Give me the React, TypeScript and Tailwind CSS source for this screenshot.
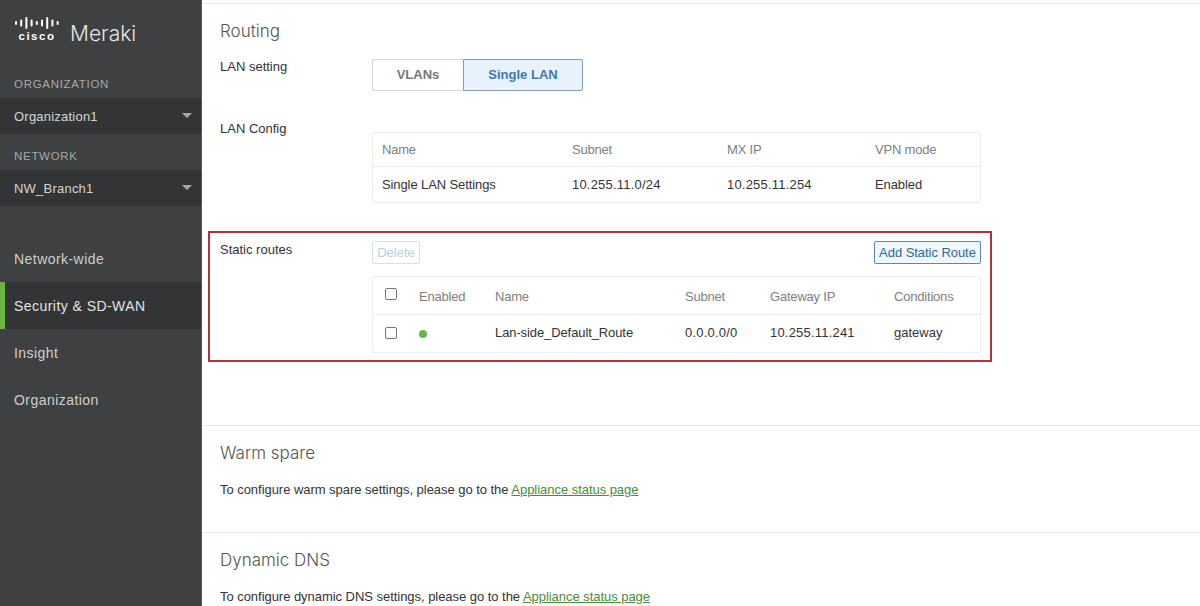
const sans = "font-['Liberation_Sans','Inter',sans-serif]";
const inter = "font-['Inter',sans-serif]";

function CiscoLogo() {
  const bars = [4, 7, 12, 7, 4, 7, 12, 7, 4];
  return (
    <div className="-mt-[11px] flex w-[46px] flex-col items-center">
      <svg width="46" height="14" viewBox="0 0 46 14">
        {bars.map((h, i) => (
          <rect key={i} x={1 + i * 5.2} y={7 - h / 2} width="2" height={h} rx="1" fill="#ffffff" />
        ))}
      </svg>
      <span className="mt-[1px] text-[11.5px] leading-[10px] font-bold tracking-[1.5px] text-white">cisco</span>
    </div>
  );
}

function Select({ label }: { label: string }) {
  return (
    <div className="flex h-9 items-center justify-between bg-[#333435] pt-[1px] pr-[9px] pl-[14px] text-[13px] tracking-[0.22px] text-[#d4d4d4]">
      <span>{label}</span>
      <span className="mb-[3px] h-0 w-0 border-x-[5px] border-t-[5px] border-x-transparent border-t-[#a9a9a9]" />
    </div>
  );
}

function Sidebar() {
  const nav = ["Network-wide", "Security & SD-WAN", "Insight", "Organization"];
  return (
    <aside className="flex h-full w-[202px] shrink-0 flex-col border-r border-[#54565a] bg-[#3e4042]">
      <div className="flex h-[66px] items-center gap-[10px] pt-[1px] pl-[14px]">
        <CiscoLogo />
        <span className={`${inter} text-[21px] leading-none font-light text-[#e6e6e6]`}>Meraki</span>
      </div>
      <div className="flex h-8 items-end pb-[8px] pl-[14px] text-[11.5px] leading-none tracking-[0.7px] text-[#a8a8a8]">ORGANIZATION</div>
      <Select label="Organization1" />
      <div className="flex h-9 items-end pb-[8px] pl-[14px] text-[11.5px] leading-none tracking-[0.7px] text-[#a8a8a8]">NETWORK</div>
      <Select label="NW_Branch1" />
      <nav className="mt-[29px] flex flex-col">
        {nav.map((item) => (
          <div
            key={item}
            className={
              item === "Security & SD-WAN"
                ? "flex h-[47px] items-center border-l-[5px] border-[#6cb544] bg-[#333435] pt-[2px] pl-[9px] text-[14px] tracking-[0.45px] text-[#e2e2e2]"
                : "flex h-[47px] items-center pt-[2px] pl-[14px] text-[14px] tracking-[0.45px] text-[#cfcfcf]"
            }
          >
            {item}
          </div>
        ))}
      </nav>
    </aside>
  );
}

function Check() {
  return <span className="block h-[12px] w-[12px] rounded-[2px] border border-[#767676] bg-white" />;
}

function Routing() {
  return (
    <section className="h-[422px] border-t border-[#e8e8e8] pt-[16px]">
      <h2 className={`${inter} pl-[18px] text-[17px] leading-[22px] font-light text-[#555]`}>Routing</h2>
      <div className="mt-[12px] flex pl-[18px]">
        <div className="w-[152px] pt-[4px] text-[13px] leading-[18px] text-[#333]">LAN setting</div>
        <div className="mt-[5px] flex h-[32px] rounded-[2px] text-[13px] font-bold">
          <div className="flex w-[91px] items-center justify-center rounded-l-[2px] border border-r-0 border-[#d4d4d4] text-[#777]">VLANs</div>
          <div className="flex w-[120px] items-center justify-center rounded-r-[2px] border border-[#7d9db5] bg-[#e8f2fc] text-[#3f78b2]">Single LAN</div>
        </div>
      </div>
      <div className="mt-[29px] flex pl-[18px]">
        <div className="w-[152px] text-[13px] leading-[18px] text-[#333]">LAN Config</div>
        <div className="mt-[12px] w-[609px] rounded-[2px] border border-[#ececec] text-[13px]">
          <div className="grid h-[34px] grid-cols-[190px_155px_148px_1fr] items-center border-b border-[#ececec] pl-[9px] tracking-[-0.2px] text-[#808080]">
            <span>Name</span>
            <span>Subnet</span>
            <span>MX IP</span>
            <span>VPN mode</span>
          </div>
          <div className="grid h-[35px] grid-cols-[190px_155px_148px_1fr] items-center pl-[9px] text-[#333]">
            <span className="tracking-[-0.1px]">Single LAN Settings</span>
            <span className="tracking-[0.2px]">10.255.11.0/24</span>
            <span className="tracking-[0.2px]">10.255.11.254</span>
            <span className="tracking-[-0.1px]">Enabled</span>
          </div>
        </div>
      </div>
      <div className="mt-[28px] ml-[6px] flex h-[131px] w-[784px] border-2 border-[#b8303c] pt-[8px] pl-[10px]">
        <div className="w-[152px] text-[13px] leading-[18px] text-[#333]">Static routes</div>
        <div className="w-[609px]">
          <div className="flex h-[23px] items-stretch justify-between text-[13px]">
            <div className="flex w-[48px] items-center justify-center rounded-[2px] border border-[#d3e3ec] text-[#b6d0e0]">Delete</div>
            <div className="flex w-[107px] items-center justify-center rounded-[2px] border border-[#5f8aa5] bg-[#f0f7fc] tracking-[-0.05px] text-[#2f6a96]">Add Static Route</div>
          </div>
          <div className="mt-[12px] rounded-[2px] border border-[#ececec] text-[13px]">
            <div className="grid h-[38px] grid-cols-[34px_76px_190px_85px_124px_1fr] items-center border-b border-[#ececec] pt-[2px] pl-[12px] tracking-[-0.2px] text-[#808080]">
              <span className="-mt-[5px]"><Check /></span>
              <span>Enabled</span>
              <span>Name</span>
              <span>Subnet</span>
              <span>Gateway IP</span>
              <span>Conditions</span>
            </div>
            <div className="grid h-[37px] grid-cols-[34px_76px_190px_85px_124px_1fr] items-center pb-[2px] pl-[12px] text-[#333]">
              <span className="mt-[1px]"><Check /></span>
              <span className="mt-[3px] block h-[8px] w-[8px] rounded-full bg-[#6cb04a]" />
              <span className="tracking-[-0.1px]">Lan-side_Default_Route</span>
              <span className="tracking-[0.2px]">0.0.0.0/0</span>
              <span className="tracking-[0.2px]">10.255.11.241</span>
              <span>gateway</span>
            </div>
          </div>
        </div>
      </div>
    </section>
  );
}

function Notice({ title, text }: { title: string; text: string }) {
  return (
    <section className="h-[107px] border-t border-[#e8e8e8] pt-[16px] pl-[18px]">
      <h2 className={`${inter} text-[17px] leading-[22px] font-light text-[#555]`}>{title}</h2>
      <p className="mt-[17px] text-[13px] leading-[18px] tracking-[-0.04px] text-[#333]">
        {text} <span className="text-[#4c8a3c] underline">Appliance status page</span>
      </p>
    </section>
  );
}

export default function App() {
  return (
    <div className={`flex h-[606px] w-[1200px] overflow-hidden bg-white ${sans}`}>
      <Sidebar />
      <main className="min-w-0 flex-1 overflow-hidden pt-[3px]">
        <Routing />
        <Notice title="Warm spare" text="To configure warm spare settings, please go to the" />
        <Notice title="Dynamic DNS" text="To configure dynamic DNS settings, please go to the" />
      </main>
    </div>
  );
}
